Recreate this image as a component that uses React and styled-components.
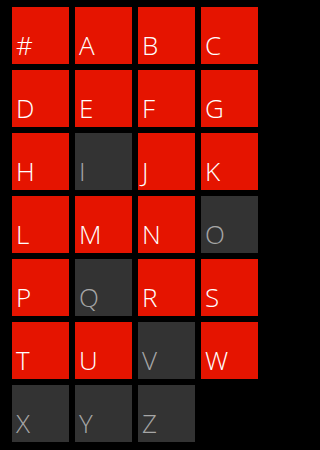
import React from 'react';
import styled, { createGlobalStyle } from 'styled-components';

const GlobalStyle = createGlobalStyle`
  html, body {
    margin: 0;
    padding: 0;
    background: #000;
  }
`;

const JumpGrid = styled.div`
  display: grid;
  grid-template-columns: repeat(4, 57px);
  grid-auto-rows: 57px;
  gap: 6px;
  padding: 7px 0 0 12px;
`;

const Tile = styled.div`
  display: flex;
  align-items: flex-end;
  padding: 0 0 6px 4px;
  box-sizing: border-box;
  background: ${(p) => (p.$active ? '#e51400' : '#333333')};
  color: ${(p) => (p.$active ? '#ffffff' : '#a6a6a6')};
  font-family: 'Open Sans', 'Noto Sans', sans-serif;
  font-weight: 300;
  font-size: 26px;
  line-height: 1;
`;

const letters = '#ABCDEFGHIJKLMNOPQRSTUVWXYZ'.split('');
const empty = ['I', 'O', 'Q', 'V', 'X', 'Y', 'Z'];

const App = () => {
  return (
    <React.Fragment>
      <GlobalStyle />
      <JumpGrid>
        {letters.map((l) => (
          <Tile key={l} $active={!empty.includes(l)}>
            {l}
          </Tile>
        ))}
      </JumpGrid>
    </React.Fragment>
  );
};

export default App;
